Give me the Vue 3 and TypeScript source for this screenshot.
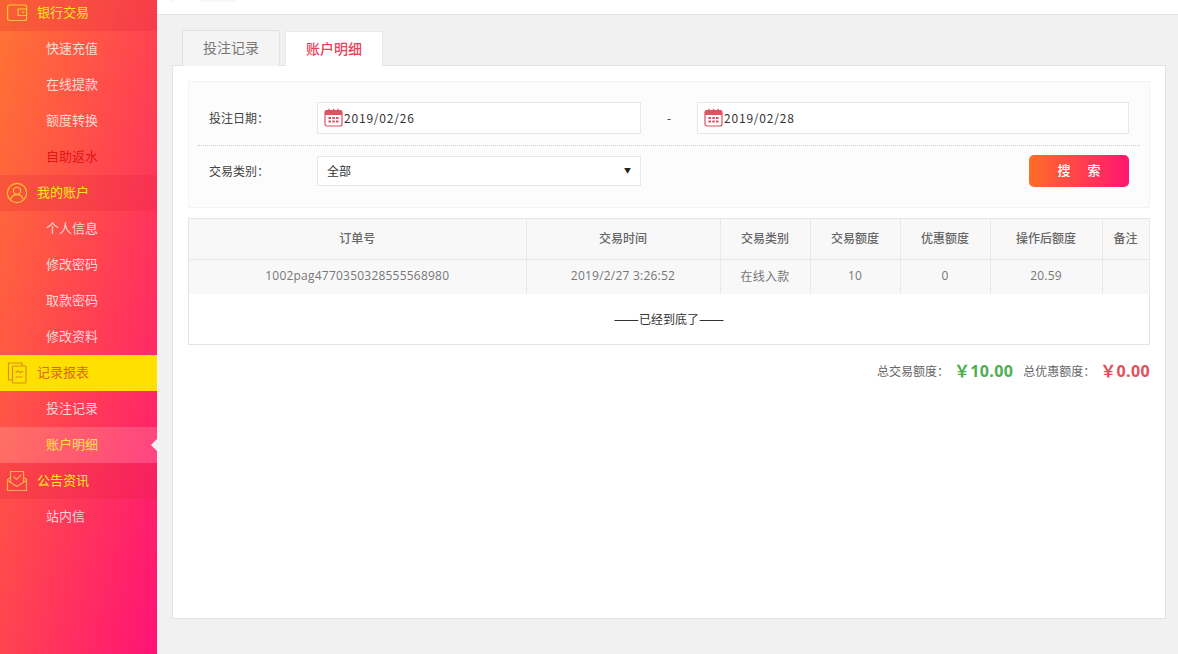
<script setup lang="ts">
interface MenuItem { label: string; kind: 'head' | 'sub'; icon?: string; state?: string }

const menu: MenuItem[] = [
  { label: '银行交易', kind: 'head', icon: 'wallet' },
  { label: '快速充值', kind: 'sub' },
  { label: '在线提款', kind: 'sub' },
  { label: '额度转换', kind: 'sub' },
  { label: '自助返水', kind: 'sub', state: 'red' },
  { label: '我的账户', kind: 'head', icon: 'user' },
  { label: '个人信息', kind: 'sub' },
  { label: '修改密码', kind: 'sub' },
  { label: '取款密码', kind: 'sub' },
  { label: '修改资料', kind: 'sub' },
  { label: '记录报表', kind: 'head', icon: 'report', state: 'open' },
  { label: '投注记录', kind: 'sub' },
  { label: '账户明细', kind: 'sub', state: 'active' },
  { label: '公告资讯', kind: 'head', icon: 'mail' },
  { label: '站内信', kind: 'sub' }
]

const columns = [
  { title: '订单号', width: 337, value: '1002pag4770350328555568980' },
  { title: '交易时间', width: 194, value: '2019/2/27 3:26:52' },
  { title: '交易类别', width: 90, value: '在线入款' },
  { title: '交易额度', width: 90, value: '10' },
  { title: '优惠额度', width: 90, value: '0' },
  { title: '操作后额度', width: 112, value: '20.59' },
  { title: '备注', width: 47, value: '' }
]
</script>

<template>
  <div class="page">
    <aside class="side">
      <ul class="menu">
        <li
          v-for="item in menu"
          :key="item.label"
          class="row"
          :class="[item.kind, item.state]"
        >
          <span v-if="item.icon" class="ico" :class="item.icon">
            <svg v-if="item.icon === 'wallet'" width="22" height="18" viewBox="0 0 22 18" fill="none" stroke="currentColor" stroke-width="1.2">
              <rect x="1.600" y="1" width="19" height="15.500" rx="2" />
              <path d="M20.600 5h-8.500v6.500h8.500" />
              <path d="M16 8.200h2.500" />
            </svg>
            <svg v-else-if="item.icon === 'user'" width="22" height="22" viewBox="0 0 22 22" fill="none" stroke="currentColor" stroke-width="1.100">
              <circle cx="11" cy="11" r="9.600" />
              <circle cx="11" cy="8.800" r="3.600" />
              <path d="M4.800 17.400c.8-3.200 3.200-4.800 6.200-4.800s5.400 1.600 6.200 4.800" />
            </svg>
            <svg v-else-if="item.icon === 'report'" width="20" height="22" viewBox="0 0 20 22" fill="none" stroke="currentColor" stroke-width="1.200">
              <path d="M5.500 18H1.500V1h13.500v3" />
              <rect x="5.500" y="4" width="13.500" height="17" rx="1" />
              <path d="M8.500 10.500l2.500-1.500 2.500 1.500 2.500-1.500M8.500 15h7" />
            </svg>
            <svg v-else width="22" height="22" viewBox="0 0 22 22" fill="none" stroke="currentColor" stroke-width="1.200">
              <path d="M4.500 7.500L1.500 9.500V20.500H20.500V9.500L17.500 7.500" />
              <path d="M4.500 12.500V1.500H17.500V12.500" />
              <path d="M1.500 10.500L11 16.500L20.500 10.500" />
              <path d="M7.500 6.500l3 3 4.500-4.500" />
            </svg>
          </span>
          <span class="txt">{{ item.label }}</span>
        </li>
      </ul>
    </aside>

    <main class="main">
      <div class="top"><i class="mark short"></i><i class="mark long"></i></div>

      <div class="tabs">
        <span class="tab"><span class="tab-txt">投注记录</span></span>
        <span class="tab on"><span class="tab-txt">账户明细</span></span>
      </div>

      <section class="panel">
        <form class="filter">
          <div class="f-row first">
            <label class="lab">投注日期：</label>
            <div class="field date wide">
              <svg class="cal" width="19" height="19" viewBox="0 0 19 19" fill="none">
                <rect x="1" y="2.500" width="17" height="15.500" rx="2" stroke="#d9505e" stroke-width="1.200" />
                <path d="M1 3.500a1.500 1.500 0 0 1 1.500-1.500h14a1.500 1.500 0 0 1 1.500 1.500V7H1z" fill="#e4505f" />
                <path d="M5 .8v3M9.500 .8v3M14 .8v3" stroke="#d9505e" stroke-width="1.200" />
                <path d="M4.500 10h2.500M8.300 10h2.500M12 10h2.500M4.500 13.500h2.500M8.300 13.500h2.500M12 13.500h2.500" stroke="#d9505e" stroke-width="2" />
              </svg>
              <span>2019/02/26</span>
            </div>
            <span class="dash">-</span>
            <div class="field date grow">
              <svg class="cal" width="19" height="19" viewBox="0 0 19 19" fill="none">
                <rect x="1" y="2.500" width="17" height="15.500" rx="2" stroke="#d9505e" stroke-width="1.200" />
                <path d="M1 3.500a1.500 1.500 0 0 1 1.500-1.500h14a1.500 1.500 0 0 1 1.500 1.500V7H1z" fill="#e4505f" />
                <path d="M5 .8v3M9.500 .8v3M14 .8v3" stroke="#d9505e" stroke-width="1.200" />
                <path d="M4.500 10h2.500M8.300 10h2.500M12 10h2.500M4.500 13.500h2.500M8.300 13.500h2.500M12 13.500h2.500" stroke="#d9505e" stroke-width="2" />
              </svg>
              <span>2019/02/28</span>
            </div>
          </div>
          <div class="f-row second">
            <label class="lab">交易类别：</label>
            <div class="field select wide">
              <span>全部</span>
              <span class="caret">▼</span>
            </div>
            <button type="button" class="btn">搜 索</button>
          </div>
        </form>

        <div class="grid-wrap">
          <table class="grid">
            <colgroup>
              <col v-for="c in columns" :key="c.title" :style="{ width: c.width + 'px' }" />
            </colgroup>
            <thead>
              <tr><th v-for="c in columns" :key="c.title">{{ c.title }}</th></tr>
            </thead>
            <tbody>
              <tr><td v-for="c in columns" :key="c.title">{{ c.value }}</td></tr>
            </tbody>
          </table>
          <div class="end"><span class="rule">——</span>已经到底了<span class="rule">——</span></div>
        </div>

        <div class="sum">
          <span class="sum-lab">总交易额度：</span>
          <b class="amount green">￥10.00</b>
          <span class="sum-lab second-lab">总优惠额度：</span>
          <b class="amount red-num">￥0.00</b>
        </div>
      </section>
    </main>
  </div>
</template>

<style>
html, body { margin: 0; background: #f1f1f1; }
</style>

<style scoped>
.page {
  display: flex;
  width: 1178px;
  height: 654px;
  overflow: hidden;
  background: #f1f1f1;
  font-family: "Noto Sans CJK SC", "Open Sans", sans-serif;
  font-size: 12px;
  color: #333;
}

.side {
  width: 157px;
  flex: none;
  overflow: hidden;
  background: linear-gradient(to bottom right, #ff7433 0%, #ff4450 50%, #ff1275 100%);
}
.menu { list-style: none; margin: -5px 0 0; padding: 0; }
.row {
  position: relative;
  display: flex;
  align-items: center;
  height: 36px;
  font-size: 13px;
}
.txt { padding-bottom: 4px; }
.head { color: #ffe81a; background: rgba(225, 30, 60, .22); padding-left: 6px; }
.sub { color: rgba(255, 255, 255, .78); padding-left: 46px; }
.ico { width: 22px; height: 22px; display: flex; align-items: center; justify-content: center; margin-right: 9px; color: #ffc62e; }
.red { color: #e51515; }
.open { background: #ffe000; color: #d9661c; }
.open .ico { color: #d9901c; }
.ico.mail { color: #ffb04a; }
.active { background: rgba(255, 255, 255, .16); color: #ffe24a; }
.active::after {
  content: "";
  position: absolute;
  right: 0;
  top: 12px;
  border: 6px solid transparent;
  border-left-width: 0;
  border-right-color: #f1f1f1;
}

.main { flex: 1; min-width: 0; display: flex; flex-direction: column; }
.top {
  height: 14px;
  flex: none;
  background: #fff;
  border-bottom: 1px solid #e2e2e2;
  padding-left: 13px;
  display: flex;
  align-items: flex-start;
  gap: 26px;
}
.mark { display: block; height: 2px; background: #f7f7f7; }
.mark.short { width: 5px; }
.mark.long { width: 36px; }
.tabs { display: flex; align-items: flex-end; gap: 5px; height: 51px; padding-left: 25px; flex: none; position: relative; z-index: 1; margin-bottom: -1px; }
.tab {
  width: 96px;
  height: 35px;
  background: #f4f4f4;
  border: 1px solid #e2e2e2;
  border-bottom: none;
  display: flex;
  align-items: center;
  justify-content: center;
  font-size: 14px;
  color: #777;
}
.tab-txt { padding-bottom: 3px; }
.tab.on { background: #fff; color: #e8455c; height: 34px; font-weight: 500; border-color: #e9e9e9; }

.panel {
  margin-left: 15px;
  width: 992px;
  height: 552px;
  background: #fff;
  border: 1px solid #e3e3e3;
  flex: none;
}
.filter {
  margin: 15px 15px 0;
  height: 125px;
  background: #fcfcfc;
  border: 1px solid #f3f3f3;
  padding: 0 9px;
}
.f-row { display: flex; align-items: center; padding-left: 11px; }
.f-row.first { box-sizing: border-box; height: 64px; border-bottom: 1px dotted #ccc; padding-top: 8px; }
.f-row.second { box-sizing: border-box; height: 61px; padding-right: 11px; padding-bottom: 11px; }
.lab { width: 108px; flex: none; color: #444; }
.second .lab { padding-bottom: 2px; }
.field {
  box-sizing: border-box;
  background: #fff;
  border: 1px solid #e8e8e8;
  display: flex;
  align-items: center;
  color: #333;
}
.wide { width: 324px; flex: none; }
.grow { width: 432px; flex: none; margin-right: 10px; }
.date { height: 32px; padding-left: 6px; font-size: 12px; letter-spacing: .8px; }
.cal { margin-right: 1px; flex: none; }
.dash { width: 56px; text-align: center; color: #333; }
.select { height: 30px; padding: 0 9px 0 9px; justify-content: space-between; }
.select span { padding-bottom: 2px; }
.caret { font-size: 7px; color: #222; }
.btn {
  margin-left: auto;
  width: 100px;
  height: 32px;
  border: none;
  border-radius: 5px;
  background: linear-gradient(90deg, #ff6d26, #ff1670);
  color: #fff;
  font: 500 13px "Noto Sans CJK SC", sans-serif;
  word-spacing: 14px;
  padding: 0 0 3px;
}

.grid-wrap {
  margin: 10px 15px 0;
  width: 960px;
  border: 1px solid #e4e4e4;
}
.grid { border-collapse: collapse; table-layout: fixed; width: 960px; }
.grid th, .grid td {
  box-sizing: border-box;
  border-right: 1px solid #e9e9e9;
  text-align: center;
  padding: 0 0 2px;
  font-weight: 500;
  background: #f8f8f8;
}
.grid th { height: 40px; border-bottom: 1px solid #e6e6e6; color: #666; font-size: 12px; }
.grid td { height: 35px; color: #777; font-weight: 400; letter-spacing: .22px; font-family: "Open Sans", "Noto Sans CJK SC", sans-serif; }
.end { height: 50px; display: flex; align-items: center; justify-content: center; color: #333; padding-bottom: 2px; box-sizing: border-box; }
.rule { font-size: 15px; line-height: 1; }

.sum { display: flex; justify-content: flex-end; align-items: center; height: 50px; margin-right: 15px; color: #666; font-size: 12px; }
.second-lab { margin-left: 10px; }
.amount { font: 700 16px "Open Sans", "Noto Sans CJK SC", sans-serif; letter-spacing: .35px; }
.green { color: #4caf50; margin-left: 5px; }
.red-num { color: #e3505b; margin-left: 5px; }
</style>
